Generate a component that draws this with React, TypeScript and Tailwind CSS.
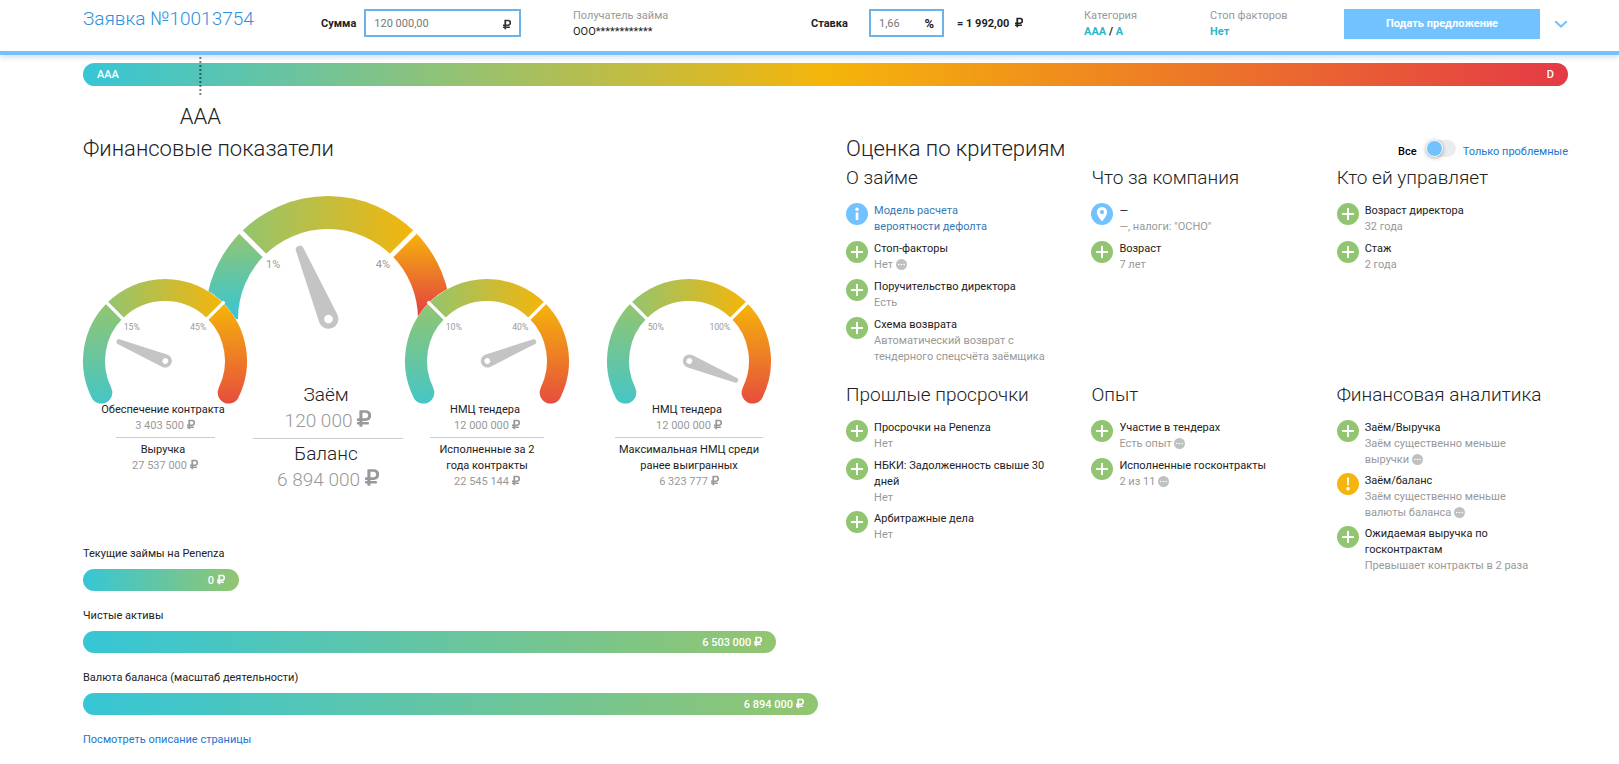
import { useState } from 'react';
import type { ReactNode } from 'react';
import { FaRubleSign } from 'react-icons/fa';

interface GaugeProps {
  id: string;
  angle: number;       // needle angle, 0 points up
  from: string;
  to: string;
  large?: boolean;
}

interface Criterion {
  icon: 'plus' | 'warn' | 'info' | 'pin';
  title: ReactNode;
  text?: string;
  more?: boolean;
  link?: boolean;
}

interface Section {
  title: string;
  items: Criterion[];
}

const sections: Section[] = [
  {
    title: 'О займе',
    items: [
      { icon: 'info', title: <>Модель расчета<br />вероятности дефолта</>, link: true },
      { icon: 'plus', title: 'Стоп-факторы', text: 'Нет', more: true },
      { icon: 'plus', title: 'Поручительство директора', text: 'Есть' },
      { icon: 'plus', title: 'Схема возврата', text: 'Автоматический возврат с тендерного спецсчёта заёмщика' },
    ],
  },
  {
    title: 'Что за компания',
    items: [
      { icon: 'pin', title: '—', text: '—, налоги: "ОСНО"' },
      { icon: 'plus', title: 'Возраст', text: '7 лет' },
    ],
  },
  {
    title: 'Кто ей управляет',
    items: [
      { icon: 'plus', title: 'Возраст директора', text: '32 года' },
      { icon: 'plus', title: 'Стаж', text: '2 года' },
    ],
  },
  {
    title: 'Прошлые просрочки',
    items: [
      { icon: 'plus', title: 'Просрочки на Penenza', text: 'Нет' },
      { icon: 'plus', title: 'НБКИ: Задолженность свыше 30 дней', text: 'Нет' },
      { icon: 'plus', title: 'Арбитражные дела', text: 'Нет' },
    ],
  },
  {
    title: 'Опыт',
    items: [
      { icon: 'plus', title: 'Участие в тендерах', text: 'Есть опыт', more: true },
      { icon: 'plus', title: 'Исполненные госконтракты', text: '2 из 11', more: true },
    ],
  },
  {
    title: 'Финансовая аналитика',
    items: [
      { icon: 'plus', title: 'Заём/Выручка', text: 'Заём существенно меньше выручки', more: true },
      { icon: 'warn', title: 'Заём/баланс', text: 'Заём существенно меньше валюты баланса', more: true },
      { icon: 'plus', title: 'Ожидаемая выручка по госконтрактам', text: 'Превышает контракты в 2 раза' },
    ],
  },
];

const bars = [
  { label: 'Текущие займы на Penenza', value: '0', amount: 0 },
  { label: 'Чистые активы', value: '6 503 000', amount: 6503000 },
  { label: 'Валюта баланса (масштаб деятельности)', value: '6 894 000', amount: 6894000 },
];

const maxAmount = 6894000;

function Ruble() {
  return <FaRubleSign className="inline-block w-[0.75em] align-baseline translate-y-px" aria-label="руб." />;
}

function Gauge({ id, angle, from, to, large }: GaugeProps) {
  // The large gauge stops at the horizontal, small ones go on to rounded ends
  const left = large ? 'M16.5 123 A106.5 106.5 0 0 1 47.7 47.7' : 'M27.6 170.3 A106.5 106.5 0 0 1 47.7 47.7';
  const right = large ? 'M198.3 47.7 A106.5 106.5 0 0 1 229.5 123' : 'M198.3 47.7 A106.5 106.5 0 0 1 218.4 170.3';
  const bottom = large ? 123 : 215;

  return (
    <svg
      viewBox={large ? '0 0 246 186' : '0 0 246 183'}
      preserveAspectRatio="xMidYMin meet"
      className={large ? 'w-[246px] h-[186px] shrink-0' : 'w-[164px] h-[123px] overflow-visible'}
    >
      <defs>
        <linearGradient id={`${id}-l`} gradientUnits="userSpaceOnUse" x1="0" y1="36" x2="0" y2={bottom}>
          <stop offset="0" stopColor="#93c56f" />
          <stop offset="1" stopColor="#36c6d6" />
        </linearGradient>
        <linearGradient id={`${id}-m`} gradientUnits="userSpaceOnUse" x1="36" y1="0" x2="210" y2="0">
          <stop offset="0" stopColor="#93c56f" />
          <stop offset="1" stopColor="#f5b50a" />
        </linearGradient>
        <linearGradient id={`${id}-r`} gradientUnits="userSpaceOnUse" x1="0" y1="36" x2="0" y2={bottom}>
          <stop offset="0" stopColor="#f5b50a" />
          <stop offset="1" stopColor="#e43a46" />
        </linearGradient>
      </defs>
      {!large && (
        <path d="M27.6 170.3 A106.5 106.5 0 1 1 218.4 170.3" fill="#fff" stroke="#fff" strokeWidth="34" strokeLinecap="round" />
      )}
      <g fill="none" strokeWidth="33">
        <path d={left} stroke={`url(#${id}-l)`} strokeLinecap={large ? 'butt' : 'round'} />
        <path d={right} stroke={`url(#${id}-r)`} strokeLinecap={large ? 'butt' : 'round'} />
        {/* clears the round ends that would show next to the dividers */}
        <path d="M47.7 47.7 A106.5 106.5 0 0 1 198.3 47.7" stroke="#fff" />
        <path d="M47.7 47.7 A106.5 106.5 0 0 1 198.3 47.7" stroke={`url(#${id}-m)`} />
      </g>
      <g stroke="#fff" strokeWidth="5">
        <path d="M34 34 L62 62" />
        <path d="M212 34 L184 62" />
      </g>
      <g fill="#999" fontSize={large ? 11 : 13}>
        <text x="61" y={large ? 72 : 76}>{from}</text>
        <text x="185" y={large ? 72 : 76} textAnchor="end">{to}</text>
      </g>
      <path
        transform={`translate(123.5 123) rotate(${angle})`}
        fill="#c4c4c4"
        fillRule="evenodd"
        d="M-4 -75 A4 4 0 0 1 4 -75 L9.8 -1.5 A9.9 9.9 0 1 1 -9.8 -1.5 Z M0 -4.3 A4.3 4.3 0 1 0 0 4.3 A4.3 4.3 0 1 0 0 -4.3 Z"
      />
    </svg>
  );
}

function StatusIcon({ type }: { type: Criterion['icon'] }) {
  const fill = type === 'plus' ? '#92c571' : type === 'warn' ? '#f5b50f' : '#72c2ff';
  return (
    <svg viewBox="0 0 22 22" className="size-[22px] shrink-0">
      <circle cx="11" cy="11" r="11" fill={fill} />
      {type === 'plus' && <path d="M11 5v12M5 11h12" stroke="#fff" strokeWidth="2" />}
      {type === 'warn' && (
        <>
          <path d="M10 4.5h2l-.2 8h-1.6z" fill="#fff" />
          <circle cx="11" cy="15.7" r="1.8" fill="#fff" />
        </>
      )}
      {type === 'info' && (
        <>
          <circle cx="11" cy="6.3" r="1.8" fill="#fff" />
          <path d="M11 9.5v7.5" stroke="#fff" strokeWidth="2.6" />
        </>
      )}
      {type === 'pin' && (
        <path
          d="M11 4a5.2 5.2 0 0 0-5.2 5.2c0 3.8 5.2 9 5.2 9s5.2-5.2 5.2-9A5.2 5.2 0 0 0 11 4zm0 7.2a2.1 2.1 0 1 1 0-4.2 2.1 2.1 0 0 1 0 4.2z"
          fill="#fff"
        />
      )}
    </svg>
  );
}

function MoreButton() {
  return (
    <button type="button" aria-label="Подробнее" className="inline-block align-[-2px] cursor-pointer">
      <svg viewBox="0 0 11 11" className="size-[11px] block">
        <circle cx="5.5" cy="5.5" r="5.5" fill="#c0c0c0" />
        <circle cx="2.8" cy="5.5" r="0.8" fill="#fff" />
        <circle cx="5.5" cy="5.5" r="0.8" fill="#fff" />
        <circle cx="8.2" cy="5.5" r="0.8" fill="#fff" />
      </svg>
    </button>
  );
}

interface MetricProps {
  title: string;
  value: string;
  large?: boolean;
  multiline?: boolean;
}

function Metric({ title, value, large, multiline }: MetricProps) {
  return (
    <div className={large ? 'text-[19px] leading-[26px] font-light whitespace-nowrap' : ''}>
      <div className={multiline ? '' : 'pr-1'}>{title}</div>
      <div className="text-[#999]">{value} <Ruble /></div>
    </div>
  );
}

function Header() {
  return (
    <header className="relative z-20 h-[55px] pl-[83px] pr-[51px] bg-white border-b-4 border-[#72c2ff] shadow-[0_2px_6px_rgba(0,0,0,0.15)]">
      <div className="grid grid-cols-[238fr_252fr_238fr_273fr_126fr_134fr_224fr] pt-[9px]">
        <h1 className="text-[19px] leading-5 font-light text-[#2e90dc] whitespace-nowrap">Заявка №10013754</h1>
        <div className="flex items-center h-7 gap-2">
          <label htmlFor="sum" className="pt-[2px] font-bold text-[#222]">Сумма</label>
          <div className="flex items-center w-[157px] h-7 px-2 pt-[2px] border-2 border-[#6bb3e8]">
            <input id="sum" defaultValue="120 000,00" className="w-full min-w-0 text-[#777] outline-none" />
            <FaRubleSign className="w-[0.75em] shrink-0 text-[#333]" />
          </div>
        </div>
        <div className="-mt-px">
          <div className="text-[#999]">Получатель займа</div>
          <div className="text-[#222]">ООО************</div>
        </div>
        <div className="flex items-center h-7">
          <label htmlFor="rate" className="w-[58px] pt-[2px] font-bold text-[#222]">Ставка</label>
          <div className="flex items-center w-[75px] h-7 px-2 pt-[2px] border-2 border-[#6bb3e8]">
            <input id="rate" defaultValue="1,66" className="w-full min-w-0 text-[#777] outline-none" />
            <span className="text-[13px] font-bold text-[#222]">%</span>
          </div>
          <span className="ml-[13px] pt-[2px] font-bold text-[#222] whitespace-nowrap">= 1 992,00 &nbsp;<Ruble /></span>
        </div>
        <div className="-mt-px">
          <div className="text-[#999]">Категория</div>
          <div className="font-bold text-[#222]">
            <span className="text-[#2bb8c6]">AAA</span> / <span className="text-[#2bb8c6]">A</span>
          </div>
        </div>
        <div className="-mt-px">
          <div className="text-[#999]">Стоп факторов</div>
          <div className="font-bold text-[#2bb8c6]">Нет</div>
        </div>
        <div className="flex items-center justify-between h-[30px]">
          <button type="button" className="w-[196px] h-[30px] bg-[#72c2ff] text-white font-bold cursor-pointer">
            Подать предложение
          </button>
          <button type="button" aria-label="Развернуть" className="cursor-pointer">
            <svg viewBox="0 0 14 8" className="w-[14px] h-2 block">
              <path d="M1.2 1.2 L7 6.6 L12.8 1.2" fill="none" stroke="#72c2ff" strokeWidth="2" />
            </svg>
          </button>
        </div>
      </div>
    </header>
  );
}

function RatingScale() {
  return (
    <div className="relative">
      <div className="flex items-center justify-between h-[23px] px-[14px] pt-px rounded-full bg-[linear-gradient(90deg,#36c6d6_0%,#93c274_25%,#f5b50a_50%,#e43a46_100%)] text-white font-medium">
        <span>AAA</span>
        <span>D</span>
      </div>
      <div className="absolute left-[7.9%] -top-[6px] -translate-x-1/2 flex flex-col items-center">
        <div className="h-[38px] border-l-2 border-dotted border-black/50" />
        <div className="mt-2 text-[22px] leading-7 font-light">AAA</div>
      </div>
    </div>
  );
}

function FinancePanel() {
  return (
    <section className="w-[49.5%]">
      <h2 className="text-[22px] leading-7 font-light">Финансовые показатели</h2>

      <div className="flex items-start mt-[33px] text-center">
        <div className="relative z-10 w-[164px] mt-[83px]">
          <Gauge id="g1" angle={-67.5} from="15%" to="45%" />
          <Metric title="Обеспечение контракта" value="3 403 500" />
          <hr className="w-[99px] mx-auto mt-[3px] mb-1 border-[#ccc]" />
          <Metric title="Выручка" value="27 537 000" />
        </div>
        <div className="w-[150px] ml-[6px] mr-[2px]">
          <div className="flex justify-center">
            <Gauge id="g2" angle={-22.5} from="1%" to="4%" large />
          </div>
          <Metric title="Заём" value="120 000" large />
          <hr className="mt-1 mb-[2px] border-[#ccc]" />
          <Metric title="Баланс" value="6 894 000" large />
        </div>
        <div className="relative z-10 w-[164px] mt-[83px]">
          <Gauge id="g3" angle={67.5} from="10%" to="40%" />
          <Metric title="НМЦ тендера" value="12 000 000" />
          <hr className="w-[114px] mx-auto mt-[3px] mb-1 border-[#ccc]" />
          <div className="w-[114px] mx-auto">
            <Metric title="Исполненные за 2 года контракты" value="22 545 144" multiline />
          </div>
        </div>
        <div className="w-[164px] mt-[83px] ml-[38px]">
          <Gauge id="g4" angle={112.5} from="50%" to="100%" />
          <Metric title="НМЦ тендера" value="12 000 000" />
          <hr className="w-[148px] mx-auto mt-[3px] mb-1 border-[#ccc]" />
          <div className="w-[148px] mx-auto">
            <Metric title="Максимальная НМЦ среди ранее выигранных" value="6 323 777" multiline />
          </div>
        </div>
      </div>

      <div className="flex flex-col gap-[17px] mt-[53px]">
        {bars.map(bar => (
          <div key={bar.label}>
            <div>{bar.label}</div>
            <div
              className="flex items-center justify-end h-[22px] min-w-[156px] mt-[7px] px-[14px] pt-[2px] rounded-full bg-linear-to-r/srgb from-[#36c6d6] to-[#93c56f] text-white font-medium"
              style={{ width: `${(bar.amount / maxAmount) * 100}%` }}
            >
              <span>{bar.value} <Ruble /></span>
            </div>
          </div>
        ))}
        <a href="#description" className="self-start text-[#1b75cf]">Посмотреть описание страницы</a>
      </div>
    </section>
  );
}

function CriteriaPanel() {
  const [onlyProblems, setOnlyProblems] = useState(false);

  const visible = (item: Criterion) => !onlyProblems || item.icon === 'warn';

  return (
    <section className="flex-1 min-w-0">
      <div className="flex items-start justify-between">
        <h2 className="text-[22px] leading-7 font-light">Оценка по критериям</h2>
        <label className="flex items-start mt-[5px] cursor-pointer">
          <span className="mt-1 font-medium text-black">Все</span>
          <input
            type="checkbox"
            checked={onlyProblems}
            onChange={e => setOnlyProblems(e.target.checked)}
            className="peer sr-only"
          />
          <span className="flex items-center w-[30px] h-[17px] ml-[9px] mr-[7px] rounded-full bg-[#ececec] peer-checked:justify-end">
            <span className="size-[17px] rounded-full border border-white bg-[#72c2ff] shadow-[0_1px_4px_rgba(0,0,0,0.35)]" />
          </span>
          <span className="mt-1 text-[#1b75cf]">Только проблемные</span>
        </label>
      </div>

      <div className="grid grid-cols-3 gap-y-[18px] mt-[3px] -mr-[14px]">
        {sections.map(section => (
          <div key={section.title}>
            <h3 className="text-[19px] leading-6 font-light whitespace-nowrap">{section.title}</h3>
            <ul className="flex flex-col gap-[5px] mt-[13px] pr-10">
              {section.items.filter(visible).map((item, i) => (
                <li key={i} className="flex items-start gap-[6px] min-h-[33px]">
                  <StatusIcon type={item.icon} />
                  <div>
                    {item.link ? (
                      <a href="#model" className="text-[#337ab7]">{item.title}</a>
                    ) : (
                      <div>{item.title}</div>
                    )}
                    {item.text && (
                      <div className="text-[#999]">{item.text} {item.more && <MoreButton />}</div>
                    )}
                  </div>
                </li>
              ))}
            </ul>
          </div>
        ))}
      </div>
    </section>
  );
}

function App() {
  return (
    <div className="min-h-screen bg-white font-[Roboto,sans-serif] text-[11px] leading-4 text-[#222]">
      <Header />
      <main className="pt-2 pb-4 pl-[83px] pr-[51px]">
        <RatingScale />
        <div className="flex gap-7 mt-[49px]">
          <FinancePanel />
          <CriteriaPanel />
        </div>
      </main>
    </div>
  );
}

export default App;
